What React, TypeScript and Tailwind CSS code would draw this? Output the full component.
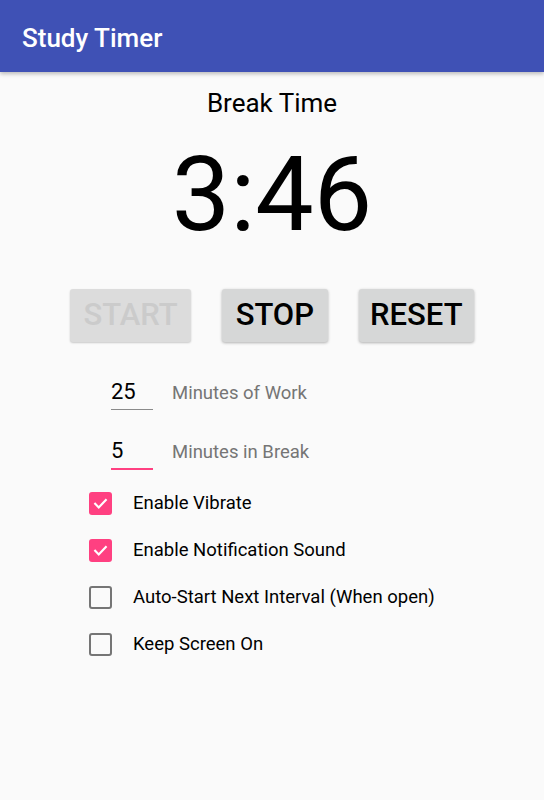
import React from "react";

function Check({ checked }: { checked: boolean }) {
  if (checked) {
    return (
      <div className="w-[23px] h-[23px] rounded-[3px] bg-[#FF4081] flex items-center justify-center">
        <svg width="17" height="17" viewBox="0 0 24 24">
          <path d="M4.5 12.5 L9.5 17.5 L19.5 7" fill="none" stroke="white" strokeWidth="3" strokeLinecap="square" />
        </svg>
      </div>
    );
  }
  return <div className="w-[23px] h-[23px] rounded-[3px] border-[2.5px] border-[#757575]" />;
}

export default function App() {
  const rows: [string, boolean][] = [
    ["Enable Vibrate", true],
    ["Enable Notification Sound", true],
    ["Auto-Start Next Interval (When open)", false],
    ["Keep Screen On", false],
  ];
  return (
    <div className="w-[544px] h-[800px] bg-[#FAFAFA] flex flex-col" style={{ fontFamily: "Roboto, sans-serif" }}>
      <div className="h-[72px] bg-[#3F51B5] flex items-center pl-[22px] shadow-[0_2px_4px_rgba(0,0,0,0.25)] relative z-10">
        <span className="text-white text-[26px] font-medium leading-none mt-[4px]">Study Timer</span>
      </div>
      <div className="mt-[16px] text-center text-[26px] leading-[30px] text-black">Break Time</div>
      <div className="mt-[25px] text-center text-[104px] leading-[104px] text-black">3:46</div>
      <div className="mt-[42px] flex justify-center gap-[31px]">
        <div className="h-[53px] px-[13px] flex items-center bg-[#DCDCDC] text-[#CBCBCB] text-[31px] font-medium rounded-[3px] shadow-[0_1px_2px_rgba(0,0,0,0.2)]">START</div>
        <div className="h-[53px] px-[14px] flex items-center bg-[#D6D7D7] text-black text-[31px] font-medium rounded-[3px] shadow-[0_1px_3px_rgba(0,0,0,0.3)]">STOP</div>
        <div className="h-[53px] px-[11px] flex items-center bg-[#D6D7D7] text-black text-[31px] font-medium rounded-[3px] shadow-[0_1px_3px_rgba(0,0,0,0.3)]">RESET</div>
      </div>
      <div className="mt-[37px] pl-[111px] flex flex-col gap-[28px]">
        <div className="flex items-baseline gap-[19px]">
          <div className="w-[42px] text-[22px] leading-[26px] pb-[4px] border-b border-[#8A8A8A] text-black">25</div>
          <span className="text-[18.5px] text-[#757575]">Minutes of Work</span>
        </div>
        <div className="flex items-baseline gap-[19px]">
          <div className="w-[42px] text-[22px] leading-[26px] pb-[4px] border-b-2 border-[#FF4081] text-black">5</div>
          <span className="text-[18.5px] text-[#757575]">Minutes in Break</span>
        </div>
      </div>
      <div className="mt-[10px] pl-[89px] flex flex-col">
        {rows.map(([label, c]) => (
          <div key={label} className="h-[47px] flex items-center gap-[21px]">
            <Check checked={c} />
            <span className="text-[18.5px] text-black">{label}</span>
          </div>
        ))}
      </div>
    </div>
  );
}
